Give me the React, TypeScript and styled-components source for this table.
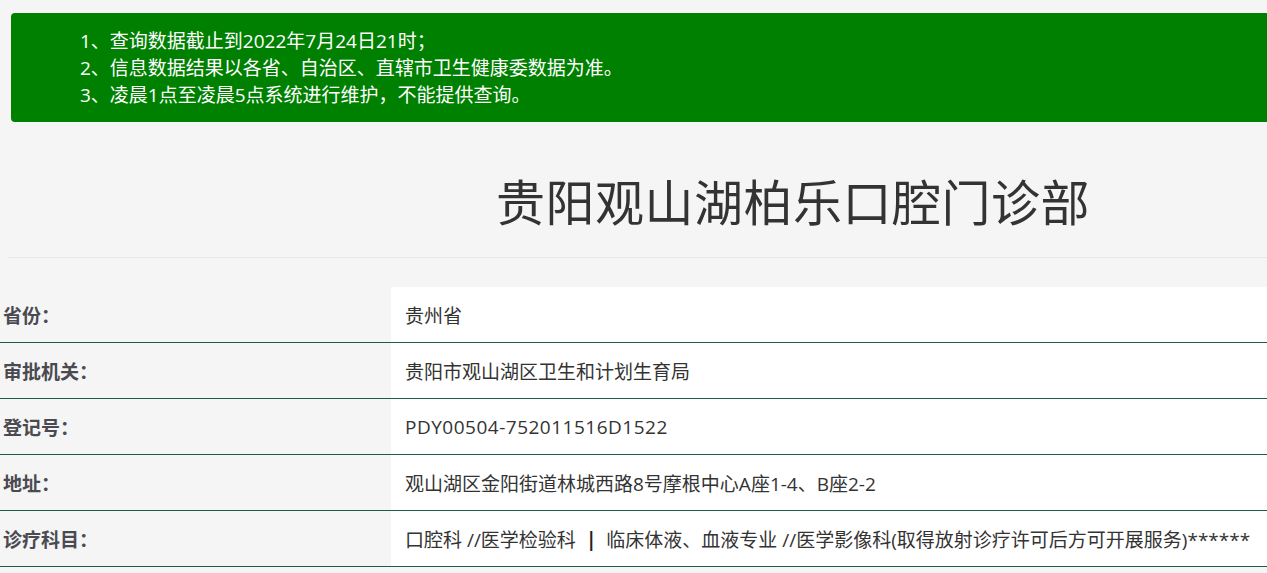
import React from "react";
import styled, { createGlobalStyle } from "styled-components";

const Global = createGlobalStyle`
  html, body { margin: 0; padding: 0; background: #f5f5f5; overflow: hidden; }
  body { font-family: "Open Sans", "Noto Sans CJK SC", sans-serif; }
`;

const Page = styled.div`
  width: 1578px;
  display: flex;
  flex-direction: column;
`;

const Notice = styled.div`
  margin: 13px 0 0 11px;
  background: #008000;
  border-radius: 4px;
  padding: 15px 0 13px 69px;
  color: #fff;
  font-size: 19px;
  line-height: 27px;
`;

const NoticeLine = styled.div`
  white-space: nowrap;
`;

const TitleBlock = styled.div`
  margin: 0 0 0 8px;
  height: 135px;
  border-bottom: 1px solid #e8e8e8;
  display: flex;
  align-items: center;
  justify-content: center;
`;

const Title = styled.h1`
  margin: 20px 0 0;
  font-family: "Noto Sans CJK SC", sans-serif;
  font-size: 49px;
  font-weight: 400;
  color: #333;
  letter-spacing: 0.5px;
`;

const Table = styled.div`
  margin-top: 29px;
  display: flex;
  flex-direction: column;
`;

const Row = styled.div`
  display: grid;
  grid-template-columns: 391px 1fr;
  height: 56px;
  border-bottom: 1px solid #1d5e44;
  box-sizing: border-box;
`;

const Label = styled.div`
  display: flex;
  align-items: center;
  padding-left: 3px;
  font-family: "Noto Sans CJK SC", sans-serif;
  font-size: 19px;
  font-weight: 700;
  color: #4a4a50;
  background: #f5f5f5;
`;

const Value = styled.div`
  display: flex;
  align-items: center;
  padding-left: 14px;
  font-size: 19px;
  color: #333;
  background: #fff;
  white-space: pre;
`;

const Latin = styled.span`
  letter-spacing: 0.5px;
`;

const Bar = styled.span`
  font-weight: 700;
  color: #222;
  margin: 0 10px;
`;

const rows: [string, React.ReactNode][] = [
  ["省份：", "贵州省"],
  ["审批机关：", "贵阳市观山湖区卫生和计划生育局"],
  ["登记号：", <Latin>PDY00504-752011516D1522</Latin>],
  ["地址：", "观山湖区金阳街道林城西路8号摩根中心A座1-4、B座2-2"],
  [
    "诊疗科目：",
    <>
      口腔科 //医学检验科<Bar>|</Bar>临床体液、血液专业 //医学影像科(取得放射诊疗许可后方可开展服务)******
    </>,
  ],
];

export default function App() {
  return (
    <Page>
      <Global />
      <Notice>
        <NoticeLine>1、查询数据截止到2022年7月24日21时；</NoticeLine>
        <NoticeLine>2、信息数据结果以各省、自治区、直辖市卫生健康委数据为准。</NoticeLine>
        <NoticeLine>3、凌晨1点至凌晨5点系统进行维护，不能提供查询。</NoticeLine>
      </Notice>
      <TitleBlock>
        <Title>贵阳观山湖柏乐口腔门诊部</Title>
      </TitleBlock>
      <Table>
        {rows.map(([k, v]) => (
          <Row key={k}>
            <Label>{k}</Label>
            <Value>{v}</Value>
          </Row>
        ))}
      </Table>
    </Page>
  );
}
